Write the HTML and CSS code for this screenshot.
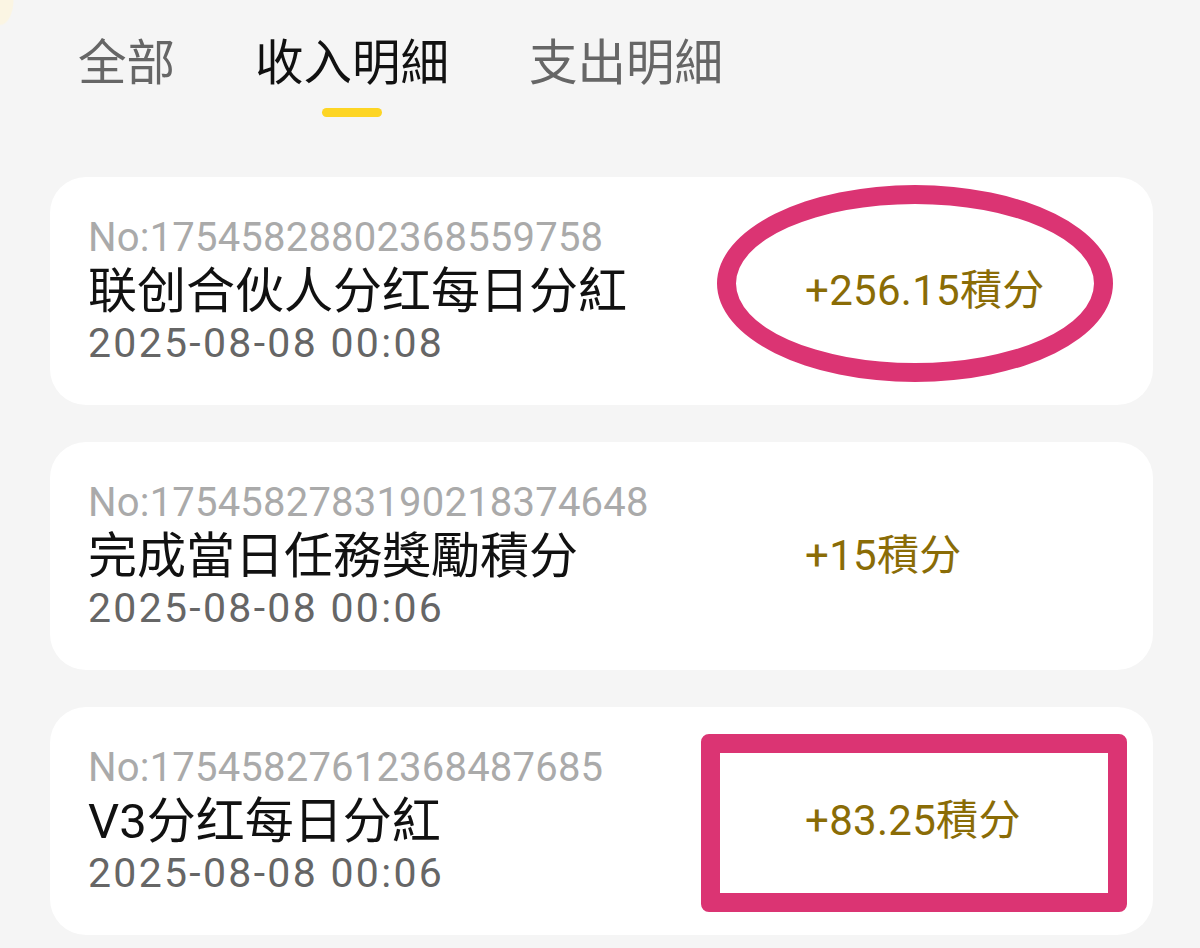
FILE: index.html
```html
<!DOCTYPE html>
<html lang="zh">
<head>
<meta charset="utf-8">
<title>積分明細</title>
<link rel="stylesheet" href="styles.css">
</head>
<body>
<div class="page">
  <nav class="tabs">
    <div class="tab">全部</div>
    <div class="tab active">收入明細</div>
    <div class="tab">支出明細</div>
  </nav>
  <div class="list">
    <div class="card">
      <div class="info">
        <div class="no">No:17545828802368559758</div>
        <div class="title">联创合伙人分红每日分紅</div>
        <div class="date">2025-08-08 00:08</div>
      </div>
      <div class="amount">+256.15積分</div>
      <div class="mark-ellipse"></div>
    </div>
    <div class="card">
      <div class="info">
        <div class="no">No:1754582783190218374648</div>
        <div class="title">完成當日任務獎勵積分</div>
        <div class="date">2025-08-08 00:06</div>
      </div>
      <div class="amount">+15積分</div>
    </div>
    <div class="card">
      <div class="info">
        <div class="no">No:17545827612368487685</div>
        <div class="title">V3分红每日分紅</div>
        <div class="date">2025-08-08 00:06</div>
      </div>
      <div class="amount">+83.25積分</div>
      <div class="mark-rect"></div>
    </div>
  </div>
</div>
</body>
</html>
```

FILE: styles.css
```css
* { box-sizing: border-box; }
html, body {
  margin: 0;
  padding: 0;
}
body {
  width: 1200px;
  height: 948px;
  overflow: hidden;
  background: #f5f5f5 radial-gradient(14px 26px at 0 0, #fbf5e3 0, #fbf5e3 92%, rgba(245,245,245,0) 100%) no-repeat;
  font-family: Roboto, "Noto Sans CJK SC", "Noto Sans CJK TC", sans-serif;
}
.page {
  display: flex;
  flex-direction: column;
}
.tabs {
  display: flex;
  gap: 80px;
  padding: 32px 0 0 78px;
}
.tab {
  position: relative;
  font-size: 48.5px;
  line-height: 64px;
  color: #666;
  padding-bottom: 21px;
}
.tab.active {
  color: #111;
}
.tab.active::after {
  content: "";
  position: absolute;
  left: 50%;
  bottom: 0;
  width: 60px;
  height: 9px;
  margin-left: -30px;
  border-radius: 5px;
  background: #fdd524;
}
.list {
  display: flex;
  flex-direction: column;
  gap: 37px;
  padding: 60px 47px 0 50px;
}
.card {
  position: relative;
  display: grid;
  grid-template-columns: 1fr 348px;
  align-items: center;
  background: #fff;
  border-radius: 36px;
  padding: 37px 0 38px 38px;
}
.info {
  display: flex;
  flex-direction: column;
}
.no {
  font-size: 40px;
  line-height: 48px;
  letter-spacing: 0.2px;
  color: #aaa;
}
.title {
  font-size: 49px;
  line-height: 54px;
  margin-top: 3px;
  color: #111;
}
.date {
  font-size: 41px;
  line-height: 48px;
  letter-spacing: 2.3px;
  color: #666;
}
.amount {
  font-size: 42px;
  line-height: 54px;
  letter-spacing: 0.3px;
  color: #8a6c06;
}
.mark-ellipse {
  position: absolute;
  left: 667px;
  top: 8px;
  width: 396px;
  height: 197px;
  border: 19px solid #db3473;
  border-radius: 50%;
}
.mark-rect {
  position: absolute;
  left: 651px;
  top: 27px;
  width: 426px;
  height: 178px;
  border: 19px solid #db3473;
  border-radius: 8px;
}
```
